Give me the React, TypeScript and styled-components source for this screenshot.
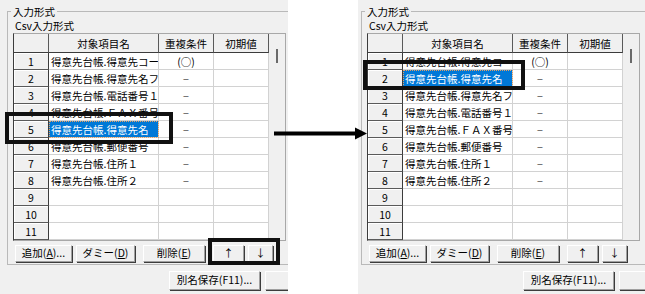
import React from "react";
import styled, { createGlobalStyle } from "styled-components";

type Row = { name: string; cond: string; selected?: boolean };

const LEFT_ROWS: Row[] = [
  { name: "得意先台帳.得意先コー", cond: "(○)" },
  { name: "得意先台帳.得意先名フ", cond: "−" },
  { name: "得意先台帳.電話番号１", cond: "−" },
  { name: "得意先台帳.ＦＡＸ番号", cond: "−" },
  { name: "得意先台帳.得意先名", cond: "−", selected: true },
  { name: "得意先台帳.郵便番号", cond: "−" },
  { name: "得意先台帳.住所１", cond: "−" },
  { name: "得意先台帳.住所２", cond: "−" },
  { name: "", cond: "" },
  { name: "", cond: "" },
  { name: "", cond: "" },
];

const RIGHT_ROWS: Row[] = [
  { name: "得意先台帳.得意先コー", cond: "(○)" },
  { name: "得意先台帳.得意先名", cond: "−", selected: true },
  { name: "得意先台帳.得意先名フ", cond: "−" },
  { name: "得意先台帳.電話番号１", cond: "−" },
  { name: "得意先台帳.ＦＡＸ番号", cond: "−" },
  { name: "得意先台帳.郵便番号", cond: "−" },
  { name: "得意先台帳.住所１", cond: "−" },
  { name: "得意先台帳.住所２", cond: "−" },
  { name: "", cond: "" },
  { name: "", cond: "" },
  { name: "", cond: "" },
];

const GlobalStyle = createGlobalStyle`
  html, body {
    margin: 0;
    padding: 0;
    background: #fff;
  }
  body {
    font-family: "Noto Sans CJK JP", "Liberation Sans", sans-serif;
    font-size: 10.5px;
    color: #000;
  }
`;

const Stage = styled.div`
  position: relative;
  display: flex;
  gap: 70px;
  width: 645px;
  height: 294px;
  overflow: hidden;
  background: #fff;
`;

const Panel = styled.div<{ $pad: number; $width: number }>`
  flex: none;
  display: flex;
  flex-direction: column;
  width: ${(p) => p.$width}px;
  height: 294px;
  padding-left: ${(p) => p.$pad}px;
  box-sizing: border-box;
  background: #f0f0f0;
  overflow: hidden;
`;

const GroupBox = styled.fieldset`
  flex: none;
  width: 320px;
  margin: 5px 0 0 0;
  padding: 0 0 2px 0;
  border: 1px solid #b9b9b9;
  box-sizing: border-box;
`;

const Legend = styled.legend`
  margin-left: 3px;
  padding: 0 2px;
  line-height: 13px;
  font-size: 10.5px;
`;

const Caption = styled.div`
  margin-top: 1px;
  padding-left: 7px;
  line-height: 13px;
`;

const GridFrame = styled.div`
  display: flex;
  width: max-content;
  margin: 1px 0 0 5px;
  border: 1px solid #a8a8a8;
  border-left-color: #3c3c3c;
  background: #fff;
`;

const Cells = styled.div`
  display: grid;
  grid-template-columns: 35px 110px 55px 55px;
  grid-template-rows: 19px;
  grid-auto-rows: 17px;
`;

const HeadCell = styled.div`
  box-sizing: border-box;
  display: flex;
  align-items: center;
  justify-content: center;
  background: #f0f0f0;
  border-right: 1px solid #5a5a5a;
  border-bottom: 1px solid #3c3c3c;
  white-space: nowrap;
  overflow: hidden;
`;

const NumCell = styled.div`
  box-sizing: border-box;
  display: flex;
  align-items: center;
  justify-content: center;
  background: #f0f0f0;
  border-right: 1px solid #3c3c3c;
  border-bottom: 1px solid #5a5a5a;
  box-shadow: inset 1px 1px 0 #fff;
`;

const DataCell = styled.div<{ $center?: boolean; $selected?: boolean }>`
  box-sizing: border-box;
  display: flex;
  align-items: center;
  justify-content: ${(p) => (p.$center ? "center" : "flex-start")};
  padding-left: ${(p) => (p.$center ? 0 : 2)}px;
  border-right: 1px solid #d2d2d2;
  border-bottom: 1px solid #d2d2d2;
  white-space: nowrap;
  overflow: hidden;
  background: ${(p) => (p.$selected ? "#0078d7" : "#fff")};
  color: ${(p) => (p.$selected ? "#fff" : "#000")};
  outline: ${(p) => (p.$selected ? "1px dotted #e8a060" : "none")};
  outline-offset: -1px;
`;

const Dash = styled.span`
  color: #505050;
`;

const ScrollTrack = styled.div`
  width: 16px;
  background: #f0f0f0;
  display: flex;
  justify-content: center;
`;

const Thumb = styled.div`
  width: 2px;
  height: 14px;
  margin-top: 15px;
  background: #6a6a6a;
`;

const ButtonRow = styled.div`
  display: flex;
  margin: 4px 0 0 7px;
`;

const Button = styled.button<{ $w: number; $h?: number; $gap?: number }>`
  flex: none;
  box-sizing: border-box;
  width: ${(p) => p.$w}px;
  height: ${(p) => p.$h ?? 17}px;
  margin: 0 0 0 ${(p) => p.$gap ?? 0}px;
  padding: 0;
  font-family: inherit;
  font-size: 10.5px;
  line-height: 1;
  color: #000;
  background: #f0f0f0;
  border: 1px solid;
  border-color: #fff #a0a0a0 #a0a0a0 #fff;
  box-shadow: 1px 1px 0 #3c3c3c;
  white-space: nowrap;
`;

const BottomBar = styled.div`
  display: flex;
  margin-top: 6px;
  padding-left: 162px;
`;

const Highlight = styled.div<{ $x: number; $y: number; $w: number; $h: number }>`
  position: absolute;
  left: ${(p) => p.$x}px;
  top: ${(p) => p.$y}px;
  width: ${(p) => p.$w}px;
  height: ${(p) => p.$h}px;
  box-sizing: border-box;
  border: 4px solid #111;
  pointer-events: none;
`;

const Arrow = styled.svg`
  position: absolute;
  left: 272px;
  top: 126px;
`;

const Grid = ({ rows }: { rows: Row[] }) => (
  <GridFrame>
    <Cells>
      <HeadCell />
      <HeadCell>対象項目名</HeadCell>
      <HeadCell>重複条件</HeadCell>
      <HeadCell>初期値</HeadCell>
      {rows.map((r, i) => (
        <React.Fragment key={i}>
          <NumCell>{i + 1}</NumCell>
          <DataCell $selected={r.selected}>{r.name}</DataCell>
          <DataCell $center>{r.cond === "−" ? <Dash>−</Dash> : r.cond}</DataCell>
          <DataCell />
        </React.Fragment>
      ))}
    </Cells>
    <ScrollTrack>
      <Thumb />
    </ScrollTrack>
  </GridFrame>
);

const InputPanel = ({ rows, pad }: { rows: Row[]; pad: number }) => (
  <Panel $pad={pad} $width={pad === 7 ? 288 : 287}>
    <GroupBox>
      <Legend>入力形式</Legend>
      <Caption>Csv入力形式</Caption>
      <Grid rows={rows} />
      <ButtonRow>
        <Button $w={57}>
          追加(<u>A</u>)...
        </Button>
        <Button $w={59} $gap={4}>
          ダミー(<u>D</u>)
        </Button>
        <Button $w={62} $gap={8}>
          削除(<u>E</u>)
        </Button>
        <Button $w={31} $gap={8}>
          ↑
        </Button>
        <Button $w={25} $gap={4}>
          ↓
        </Button>
      </ButtonRow>
    </GroupBox>
    <BottomBar>
      <Button $w={91} $h={19}>
        別名保存(F11)...
      </Button>
      <Button $w={60} $h={19} $gap={5} />
    </BottomBar>
  </Panel>
);

export default function App() {
  return (
    <>
      <GlobalStyle />
      <Stage>
        <InputPanel rows={LEFT_ROWS} pad={7} />
        <InputPanel rows={RIGHT_ROWS} pad={3} />
        <Highlight $x={5} $y={112} $w={168} $h={32} />
        <Highlight $x={208} $y={238} $w={72} $h={27} />
        <Highlight $x={363} $y={60} $w={162} $h={30} />
        <Arrow width="96" height="15" viewBox="0 0 96 15">
          <rect x="2" y="5.5" width="83" height="4" fill="#000" />
          <polygon points="83,1.5 95,7.5 83,13.5" fill="#000" />
        </Arrow>
      </Stage>
    </>
  );
}
